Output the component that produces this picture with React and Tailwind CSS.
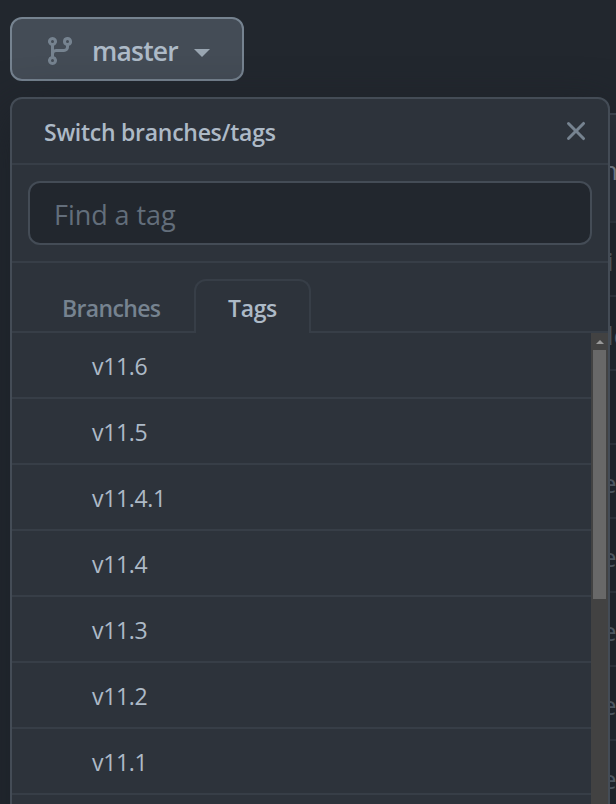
import React from "react";

const tags = ["v11.6", "v11.5", "v11.4.1", "v11.4", "v11.3", "v11.2", "v11.1", "v11.0"];
const files = ["i", "le", "", "e", "e", "e", "e", "e"];

function BranchIcon() {
  return (
    <svg viewBox="0 0 16 16" className="h-8 w-8 shrink-0 fill-[#768390]">
      <path fillRule="evenodd" d="M11.75 2.5a.75.75 0 100 1.5.75.75 0 000-1.5zm-2.25.75a2.25 2.25 0 113 2.122V6A2.5 2.5 0 0110 8.5H6a1 1 0 00-1 1v1.128a2.251 2.251 0 11-1.5 0V5.372a2.25 2.25 0 111.5 0v1.836A2.492 2.492 0 016 7h4a1 1 0 001-1v-.628A2.25 2.25 0 019.5 3.25zM4.25 12a.75.75 0 100 1.5.75.75 0 000-1.5zM3.5 3.25a.75.75 0 111.5 0 .75.75 0 01-1.5 0z" />
    </svg>
  );
}

function CloseIcon() {
  return (
    <svg viewBox="0 0 16 16" className="h-8 w-8 fill-[#768390]">
      <path fillRule="evenodd" d="M3.72 3.72a.75.75 0 011.06 0L8 6.94l3.22-3.22a.75.75 0 111.06 1.06L9.06 8l3.22 3.22a.75.75 0 11-1.06 1.06L8 9.06l-3.22 3.22a.75.75 0 01-1.06-1.06L6.94 8 3.72 4.78a.75.75 0 010-1.06z" />
    </svg>
  );
}

function FileTable() {
  return (
    <div className="mt-8 ml-auto w-2 overflow-hidden border-t-2 border-[#444c56] text-[26px] text-[#768390]">
      <div className="flex h-[106px] items-center bg-[#2d333b] pt-1 text-[#adbac7]">
        <span className="-ml-1.5">n</span>
      </div>
      {files.map((name, i) => (
        <div key={i} className="flex h-[74px] items-center border-t-2 border-[#373e47] pt-1">
          <span className={name.length === 1 && name !== "i" ? "-ml-1.5" : "-ml-px"}>{name}</span>
        </div>
      ))}
    </div>
  );
}

function TagMenu() {
  return (
    <div className="absolute top-[97px] left-[10px] flex h-[760px] w-[600px] flex-col overflow-hidden rounded-xl border-2 border-[#444c56] bg-[#2d333b] shadow-[0_16px_48px_#1c2128]">
      <div className="flex h-[66px] shrink-0 items-center justify-between border-b-2 border-[#373e47] pr-4 pl-8">
        <span className="pt-0.5 text-[23px] leading-8 font-semibold tracking-[-0.27px] text-[#adbac7]">Switch branches/tags</span>
        <button><CloseIcon /></button>
      </div>
      <div className="h-[98px] shrink-0 border-b-2 border-[#373e47] p-4">
        <input
          placeholder="Find a tag"
          className="block h-16 w-full rounded-xl border-2 border-[#444c56] bg-[#22272e] px-6 pt-0.5 text-[27px] tracking-[-0.05px] outline-none placeholder:text-[#636e7b]"
        />
      </div>
      <div className="flex h-[70px] shrink-0 items-end text-[23px] leading-8 font-semibold">
        <div className="flex h-[54px] w-[182px] items-center border-b-2 border-[#373e47] pt-1.5 pl-[50px] text-[#768390]">
          <span className="tracking-[-0.65px]">Branches</span>
        </div>
        <div className="flex h-[54px] w-[117px] items-center justify-center rounded-t-xl border-2 border-b-0 border-[#373e47] pt-0.5 text-[#adbac7]">
          <span className="tracking-[-0.35px]">Tags</span>
        </div>
        <div className="h-[54px] flex-1 border-b-2 border-[#373e47]" />
      </div>
      <div className="flex min-h-0 flex-1">
        <div className="flex-1 overflow-hidden">
          {tags.map((tag) => (
            <div key={tag} className="flex h-[66px] items-center border-b-2 border-[#373e47] pt-0.5 pl-20 text-[23px] leading-8 tracking-[-0.35px] text-[#adbac7]">
              {tag}
            </div>
          ))}
        </div>
        <div className="flex w-[17px] flex-col items-center bg-[#424242]">
          <div className="flex h-[17px] items-center">
            <div className="border-x-4 border-b-4 border-x-transparent border-b-[#999999]" />
          </div>
          <div className="h-[249px] w-[13px] bg-[#686868]" />
        </div>
      </div>
    </div>
  );
}

export default function App() {
  return (
    <div className="relative h-[804px] w-[616px] overflow-hidden bg-[#22272e] pt-[17px] font-['Open_Sans','Noto_Sans',sans-serif]">
      <button className="ml-[10px] flex h-16 w-[234px] items-center rounded-xl border-2 border-[#768390] bg-[#444c56] pt-1 pl-8 text-[#adbac7]">
        <BranchIcon />
        <span className="ml-4 w-[102px] text-left text-[26.5px] leading-10 font-semibold tracking-[-0.8px]">master</span>
        <span className="mt-1 border-x-8 border-t-8 border-x-transparent border-t-[#99a5b1]" />
      </button>
      <FileTable />
      <TagMenu />
    </div>
  );
}
